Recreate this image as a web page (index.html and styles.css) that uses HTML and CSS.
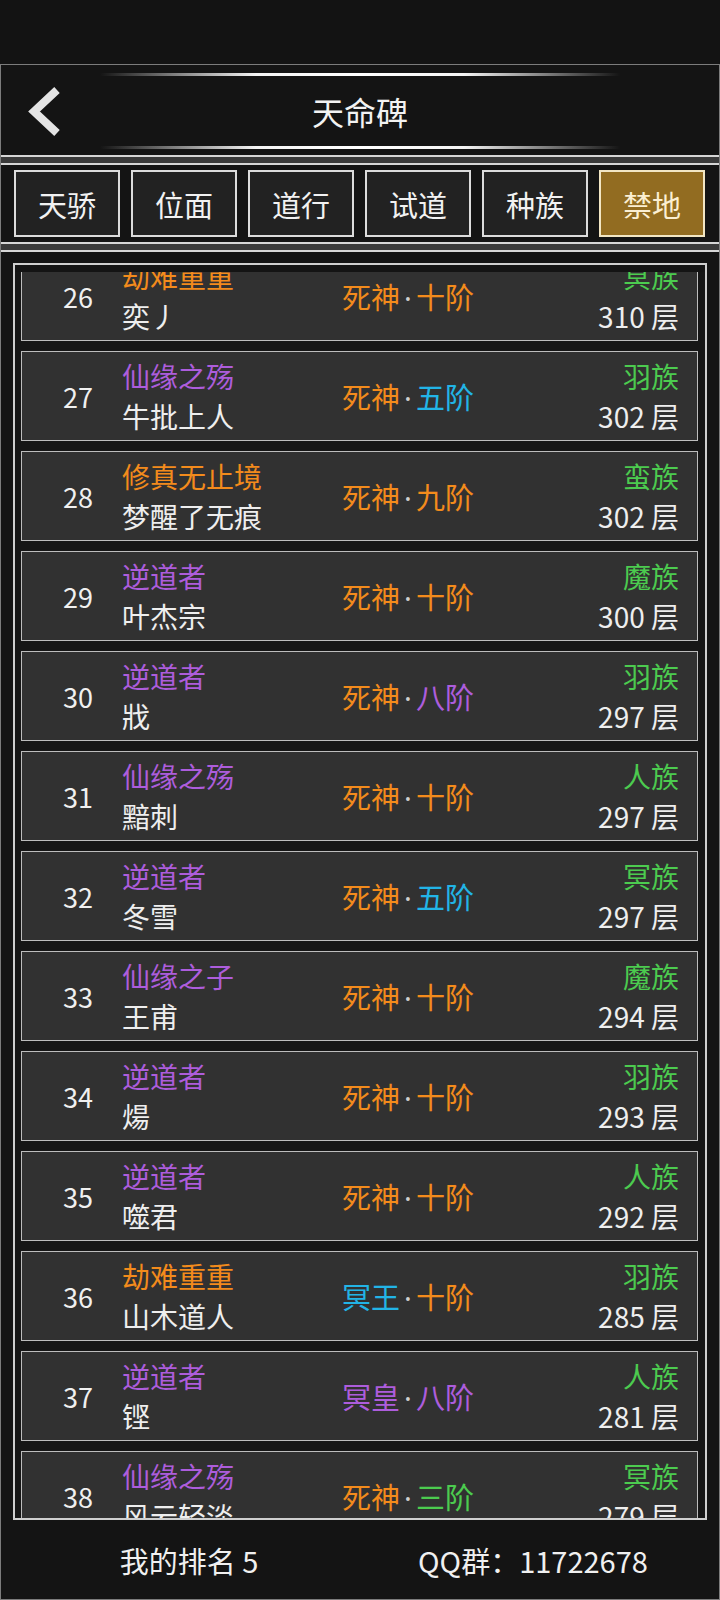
FILE: index.html
```html
<!DOCTYPE html>
<html lang="zh-CN">
<head>
  <meta charset="UTF-8" />
  <meta name="viewport" content="width=device-width, initial-scale=1.0"/>
  <title>天命碑</title>
  <link rel="stylesheet" href="styles.css">
</head>
<body>
  <div class="status-bar"></div>

  <div class="app">
    <div class="header">
      <div class="deco-line"></div>
      <div class="header-row">
        <div class="back">
          <svg width="40" height="60" viewBox="0 0 40 60">
            <polyline points="34,9 11,30.5 34,52" fill="none" stroke="#e4e4e4" stroke-width="8" />
          </svg>
        </div>
        <div class="title">天命碑</div>
        <div></div>
      </div>
      <div class="deco-line"></div>
    </div>

    <div class="divider"></div>

    <div class="tabs">
      <div class="tab">天骄</div>
      <div class="tab">位面</div>
      <div class="tab">道行</div>
      <div class="tab">试道</div>
      <div class="tab">种族</div>
      <div class="tab active">禁地</div>
    </div>

    <div class="divider"></div>

    <div class="board">
      <div class="board-view">
        <div class="rank-list">

          <div class="card">
            <div class="rank">26</div>
            <div class="who"><span class="orange">劫难重重</span><span>奕丿</span></div>
            <div class="realm"><span class="orange">死神</span><span class="dot">·</span><span class="orange">十阶</span></div>
            <div class="race"><span class="green">冥族</span><span>310 层</span></div>
          </div>

          <div class="card">
            <div class="rank">27</div>
            <div class="who"><span class="purple">仙缘之殇</span><span>牛批上人</span></div>
            <div class="realm"><span class="orange">死神</span><span class="dot">·</span><span class="blue">五阶</span></div>
            <div class="race"><span class="green">羽族</span><span>302 层</span></div>
          </div>

          <div class="card">
            <div class="rank">28</div>
            <div class="who"><span class="orange">修真无止境</span><span>梦醒了无痕</span></div>
            <div class="realm"><span class="orange">死神</span><span class="dot">·</span><span class="orange">九阶</span></div>
            <div class="race"><span class="green">蛮族</span><span>302 层</span></div>
          </div>

          <div class="card">
            <div class="rank">29</div>
            <div class="who"><span class="purple">逆道者</span><span>叶杰宗</span></div>
            <div class="realm"><span class="orange">死神</span><span class="dot">·</span><span class="orange">十阶</span></div>
            <div class="race"><span class="green">魔族</span><span>300 层</span></div>
          </div>

          <div class="card">
            <div class="rank">30</div>
            <div class="who"><span class="purple">逆道者</span><span>戕</span></div>
            <div class="realm"><span class="orange">死神</span><span class="dot">·</span><span class="purple">八阶</span></div>
            <div class="race"><span class="green">羽族</span><span>297 层</span></div>
          </div>

          <div class="card">
            <div class="rank">31</div>
            <div class="who"><span class="purple">仙缘之殇</span><span>黯刺</span></div>
            <div class="realm"><span class="orange">死神</span><span class="dot">·</span><span class="orange">十阶</span></div>
            <div class="race"><span class="green">人族</span><span>297 层</span></div>
          </div>

          <div class="card">
            <div class="rank">32</div>
            <div class="who"><span class="purple">逆道者</span><span>冬雪</span></div>
            <div class="realm"><span class="orange">死神</span><span class="dot">·</span><span class="blue">五阶</span></div>
            <div class="race"><span class="green">冥族</span><span>297 层</span></div>
          </div>

          <div class="card">
            <div class="rank">33</div>
            <div class="who"><span class="purple">仙缘之子</span><span>王甫</span></div>
            <div class="realm"><span class="orange">死神</span><span class="dot">·</span><span class="orange">十阶</span></div>
            <div class="race"><span class="green">魔族</span><span>294 层</span></div>
          </div>

          <div class="card">
            <div class="rank">34</div>
            <div class="who"><span class="purple">逆道者</span><span>煬</span></div>
            <div class="realm"><span class="orange">死神</span><span class="dot">·</span><span class="orange">十阶</span></div>
            <div class="race"><span class="green">羽族</span><span>293 层</span></div>
          </div>

          <div class="card">
            <div class="rank">35</div>
            <div class="who"><span class="purple">逆道者</span><span>噬君</span></div>
            <div class="realm"><span class="orange">死神</span><span class="dot">·</span><span class="orange">十阶</span></div>
            <div class="race"><span class="green">人族</span><span>292 层</span></div>
          </div>

          <div class="card">
            <div class="rank">36</div>
            <div class="who"><span class="orange">劫难重重</span><span>山木道人</span></div>
            <div class="realm"><span class="blue">冥王</span><span class="dot">·</span><span class="orange">十阶</span></div>
            <div class="race"><span class="green">羽族</span><span>285 层</span></div>
          </div>

          <div class="card">
            <div class="rank">37</div>
            <div class="who"><span class="purple">逆道者</span><span>铿</span></div>
            <div class="realm"><span class="purple">冥皇</span><span class="dot">·</span><span class="purple">八阶</span></div>
            <div class="race"><span class="green">人族</span><span>281 层</span></div>
          </div>

          <div class="card">
            <div class="rank">38</div>
            <div class="who"><span class="purple">仙缘之殇</span><span>风云轻淡</span></div>
            <div class="realm"><span class="orange">死神</span><span class="dot">·</span><span class="green">三阶</span></div>
            <div class="race"><span class="green">冥族</span><span>279 层</span></div>
          </div>

        </div>
      </div>
    </div>

    <div class="footer">
      <div class="footer-item">我的排名 5</div>
      <div class="footer-item">QQ群：11722678</div>
    </div>
  </div>
</body>
</html>
```

FILE: styles.css
```css
* {
  box-sizing: border-box;
}

body {
  margin: 0;
  padding: 0;
  background-color: #131313;
  color: #eeeeee;
  font-family: "Noto Sans CJK SC", "Noto Sans", sans-serif;
}

.status-bar {
  height: 64px;
  background: #131313;
}

.app {
  height: 1536px;
  border: 1px solid #7c7c7c;
  background: #141414;
  display: flex;
  flex-direction: column;
}

/* header */
.header {
  height: 90px;
  padding-top: 8px;
  display: flex;
  flex-direction: column;
}

.deco-line {
  width: 520px;
  height: 3px;
  margin: 0 auto;
  background: linear-gradient(90deg, rgba(255,255,255,0) 0%, rgba(200,200,200,0.5) 12%, #f4f4f4 30%, #ffffff 50%, #f4f4f4 70%, rgba(200,200,200,0.5) 88%, rgba(255,255,255,0) 100%);
}

.header-row {
  height: 70px;
  display: grid;
  grid-template-columns: 1fr auto 1fr;
  align-items: center;
}

.back {
  padding-left: 22px;
  display: flex;
  align-items: center;
}

.back svg {
  display: block;
}

.title {
  font-size: 32px;
  color: #f2f2f2;
  line-height: 1;
}

.divider {
  height: 10px;
  background: #3a3a3a;
  border-top: 2px solid #d6d6d6;
  border-bottom: 2px solid #d6d6d6;
}

/* tabs */
.tabs {
  height: 77px;
  padding: 5px 14px 5px 13px;
  display: flex;
  gap: 11px;
}

.tab {
  flex: 1;
  border: 2px solid #dcdcdc;
  background: #222222;
  color: #f2f2f2;
  font-size: 29px;
  display: flex;
  align-items: center;
  justify-content: center;
}

.tab.active {
  background: #926c21;
  border-color: #f2e6c4;
  color: #fbefd2;
}

/* board */
.board {
  flex: 1;
  margin: 11px 12px 0 12px;
  border: 2px solid #cfcfcf;
  padding-top: 7px;
  display: flex;
  flex-direction: column;
  min-height: 0;
}

.board-view {
  flex: 1;
  overflow: hidden;
  padding: 0 7px 0 6px;
  background: #161616;
}

.rank-list {
  margin-top: -21px;
  display: flex;
  flex-direction: column;
  gap: 10px;
}

.card {
  height: 90px;
  border: 1px solid #bdbdbd;
  background: #313131;
  padding: 0 18px 0 20px;
  display: grid;
  grid-template-columns: 80px 190px 192px 1fr;
  align-items: center;
  font-size: 28px;
}

.rank {
  padding-right: 8px;
  text-align: center;
  color: #f0f0f0;
  font-size: 27px;
}

.who,
.race {
  display: flex;
  flex-direction: column;
  line-height: 40px;
  white-space: nowrap;
}

.race {
  align-items: flex-end;
}

.realm {
  text-align: center;
  white-space: nowrap;
  font-size: 29px;
}

.dot {
  font-family: "Noto Sans", sans-serif;
  color: #d0d0d0;
  padding: 0 4px;
}

.orange {
  color: #f38b1c;
}

.purple {
  color: #ad5ddc;
}

.blue {
  color: #22b4e6;
}

.green {
  color: #4ccb4f;
}

/* footer */
.footer {
  height: 79px;
  padding: 0 14px 0 16px;
  display: grid;
  grid-template-columns: 1fr 1fr;
  align-items: center;
  font-size: 29px;
  color: #f0f0f0;
}

.footer-item {
  text-align: center;
}
```
